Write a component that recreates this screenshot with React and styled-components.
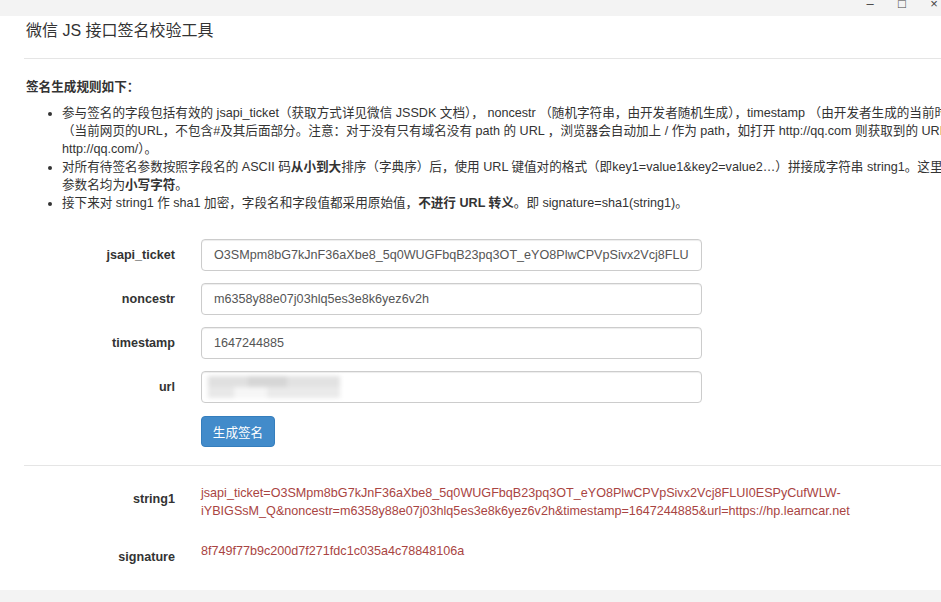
import React from 'react';
import styled, { createGlobalStyle } from 'styled-components';

const GlobalStyle = createGlobalStyle`
  html, body {
    margin: 0;
    padding: 0;
    background: #f3f3f3;
  }
  body {
    font-family: "Liberation Sans", Arial, "Noto Sans CJK SC", sans-serif;
    font-size: 12.6px;
    color: #333;
    overflow: hidden;
  }
`;

const fields = [
  { name: 'jsapi_ticket', value: 'O3SMpm8bG7kJnF36aXbe8_5q0WUGFbqB23pq3OT_eYO8PlwCPVpSivx2Vcj8FLUI0ESPyCufWLW-iYBIGSsM_Q' },
  { name: 'noncestr', value: 'm6358y88e07j03hlq5es3e8k6yez6v2h' },
  { name: 'timestamp', value: '1647244885' },
  { name: 'url', value: '', hidden: true },
];

const App = () => {
  return (
    <Page>
      <GlobalStyle />
      <TopBar>
        <WinButton>–</WinButton>
        <WinButton>□</WinButton>
        <WinButton>×</WinButton>
      </TopBar>

      <Modal>
        <Header>
          <Title>微信 JS 接口签名校验工具</Title>
        </Header>

        <Body>
          <RulesTitle>签名生成规则如下：</RulesTitle>
          <RuleList>
            <li>
              参与签名的字段包括有效的 jsapi_ticket（获取方式详见微信 JSSDK 文档）， noncestr （随机字符串，由开发者随机生成），timestamp （由开发者生成的当前时间戳）， url
              <br />
              （当前网页的URL，不包含#及其后面部分。注意：对于没有只有域名没有 path 的 URL ，浏览器会自动加上 / 作为 path，如打开 http://qq.com 则获取到的 URL 为
              <br />
              http://qq.com/）。
            </li>
            <li>
              对所有待签名参数按照字段名的 ASCII 码<b>从小到大</b>排序（字典序）后，使用 URL 键值对的格式（即key1=value1&amp;key2=value2…）拼接成字符串 string1。这里需要注意的是所有
              <br />
              参数名均为<b>小写字符</b>。
            </li>
            <li>
              接下来对 string1 作 sha1 加密，字段名和字段值都采用原始值，<b>不进行 URL 转义</b>。即 signature=sha1(string1)。
            </li>
          </RuleList>

          <FormGrid>
            {fields.map((f) => (
              <React.Fragment key={f.name}>
                <FieldLabel>{f.name}</FieldLabel>
                <InputWrap>
                  <Input defaultValue={f.value} readOnly />
                  {f.hidden && <Redaction />}
                </InputWrap>
              </React.Fragment>
            ))}
            <ButtonCell>
              <Button>生成签名</Button>
            </ButtonCell>
          </FormGrid>

          <Divider />

          <ResultGrid>
            <ResultLabel>string1</ResultLabel>
            <ResultValue>
              jsapi_ticket=O3SMpm8bG7kJnF36aXbe8_5q0WUGFbqB23pq3OT_eYO8PlwCPVpSivx2Vcj8FLUI0ESPyCufWLW-
              <br />
              iYBIGSsM_Q&amp;noncestr=m6358y88e07j03hlq5es3e8k6yez6v2h&amp;timestamp=1647244885&amp;url=https://hp.learncar.net
            </ResultValue>
            <ResultLabel>signature</ResultLabel>
            <ResultValue>8f749f77b9c200d7f271fdc1c035a4c78848106a</ResultValue>
          </ResultGrid>
        </Body>
      </Modal>
    </Page>
  );
};

const Page = styled.div`
  width: 100%;
  height: 602px;
  overflow: hidden;
  background: #f3f3f3;
`;

const TopBar = styled.div`
  height: 16px;
  display: flex;
  justify-content: flex-end;
  overflow: hidden;
  background: #f3f3f3;
`;

const WinButton = styled.span`
  width: 32px;
  margin-top: -3px;
  text-align: center;
  font-size: 13px;
  line-height: 14px;
  color: #444;

  &:last-child {
    margin-right: -9px;
  }
`;

const Modal = styled.div`
  background: #fff;
  padding: 0 0 24px 24px;
`;

const Header = styled.div`
  height: 43px;
  box-sizing: border-box;
  padding-top: 4px;
  border-bottom: 1px solid #e5e5e5;
`;

const Title = styled.h4`
  margin: 0;
  padding-left: 2px;
  font-size: 16px;
  line-height: 22px;
  font-weight: normal;
  color: #333;
`;

const Body = styled.div`
  padding-left: 2px;
`;

const RulesTitle = styled.div`
  margin: 19px 0 8px;
  font-weight: bold;
  line-height: 18px;
`;

const RuleList = styled.ul`
  margin: 0;
  padding-left: 36px;
  line-height: 18px;
  white-space: nowrap;

  b {
    font-weight: bold;
  }
`;

const FormGrid = styled.div`
  margin-top: 27px;
  display: grid;
  grid-template-columns: 149px 501px;
  column-gap: 26px;
  row-gap: 12px;
  align-items: center;
`;

const FieldLabel = styled.label`
  text-align: right;
  font-weight: bold;
`;

const InputWrap = styled.div`
  position: relative;
`;

const Input = styled.input`
  display: block;
  width: 100%;
  height: 32px;
  box-sizing: border-box;
  padding: 0 12px;
  border: 1px solid #ccc;
  border-radius: 4px;
  box-shadow: inset 0 1px 1px rgba(0, 0, 0, 0.075);
  font-family: "Liberation Sans", Arial, sans-serif;
  font-size: 12.6px;
  color: #555;
  background: #fff;
  outline: none;
`;

const Redaction = styled.span`
  position: absolute;
  left: 7px;
  top: 5px;
  width: 132px;
  height: 22px;
  background:
    linear-gradient(90deg, #e0e0e0 0 30%, #d6d6d6 30% 60%, #e2e2e2 60% 100%) top / 100% 50% no-repeat,
    linear-gradient(90deg, #e8e8e8 0 20%, #f6f6f6 20% 45%, #eaeaea 45% 100%) bottom / 100% 50% no-repeat;
  filter: blur(2px);
`;

const ButtonCell = styled.div`
  grid-column: 2;
  margin-top: 1px;
`;

const Button = styled.button`
  width: 74px;
  height: 31px;
  padding: 0;
  border: 1px solid #357ebd;
  border-radius: 4px;
  background: #428bca;
  color: #fff;
  font-family: "Liberation Sans", Arial, "Noto Sans CJK SC", sans-serif;
  font-size: 12.6px;
  cursor: pointer;
`;

const Divider = styled.div`
  margin: 18px 0 0 -2px;
  border-top: 1px solid #e5e5e5;
`;

const ResultGrid = styled.div`
  margin-top: 18px;
  display: grid;
  grid-template-columns: 149px auto;
  column-gap: 26px;
  row-gap: 22px;
  align-items: start;
`;

const ResultLabel = styled.div`
  padding-top: 6px;
  text-align: right;
  font-weight: bold;
  line-height: 18px;
`;

const ResultValue = styled.div`
  color: #a94442;
  line-height: 18px;
  white-space: nowrap;
`;

export default App;
